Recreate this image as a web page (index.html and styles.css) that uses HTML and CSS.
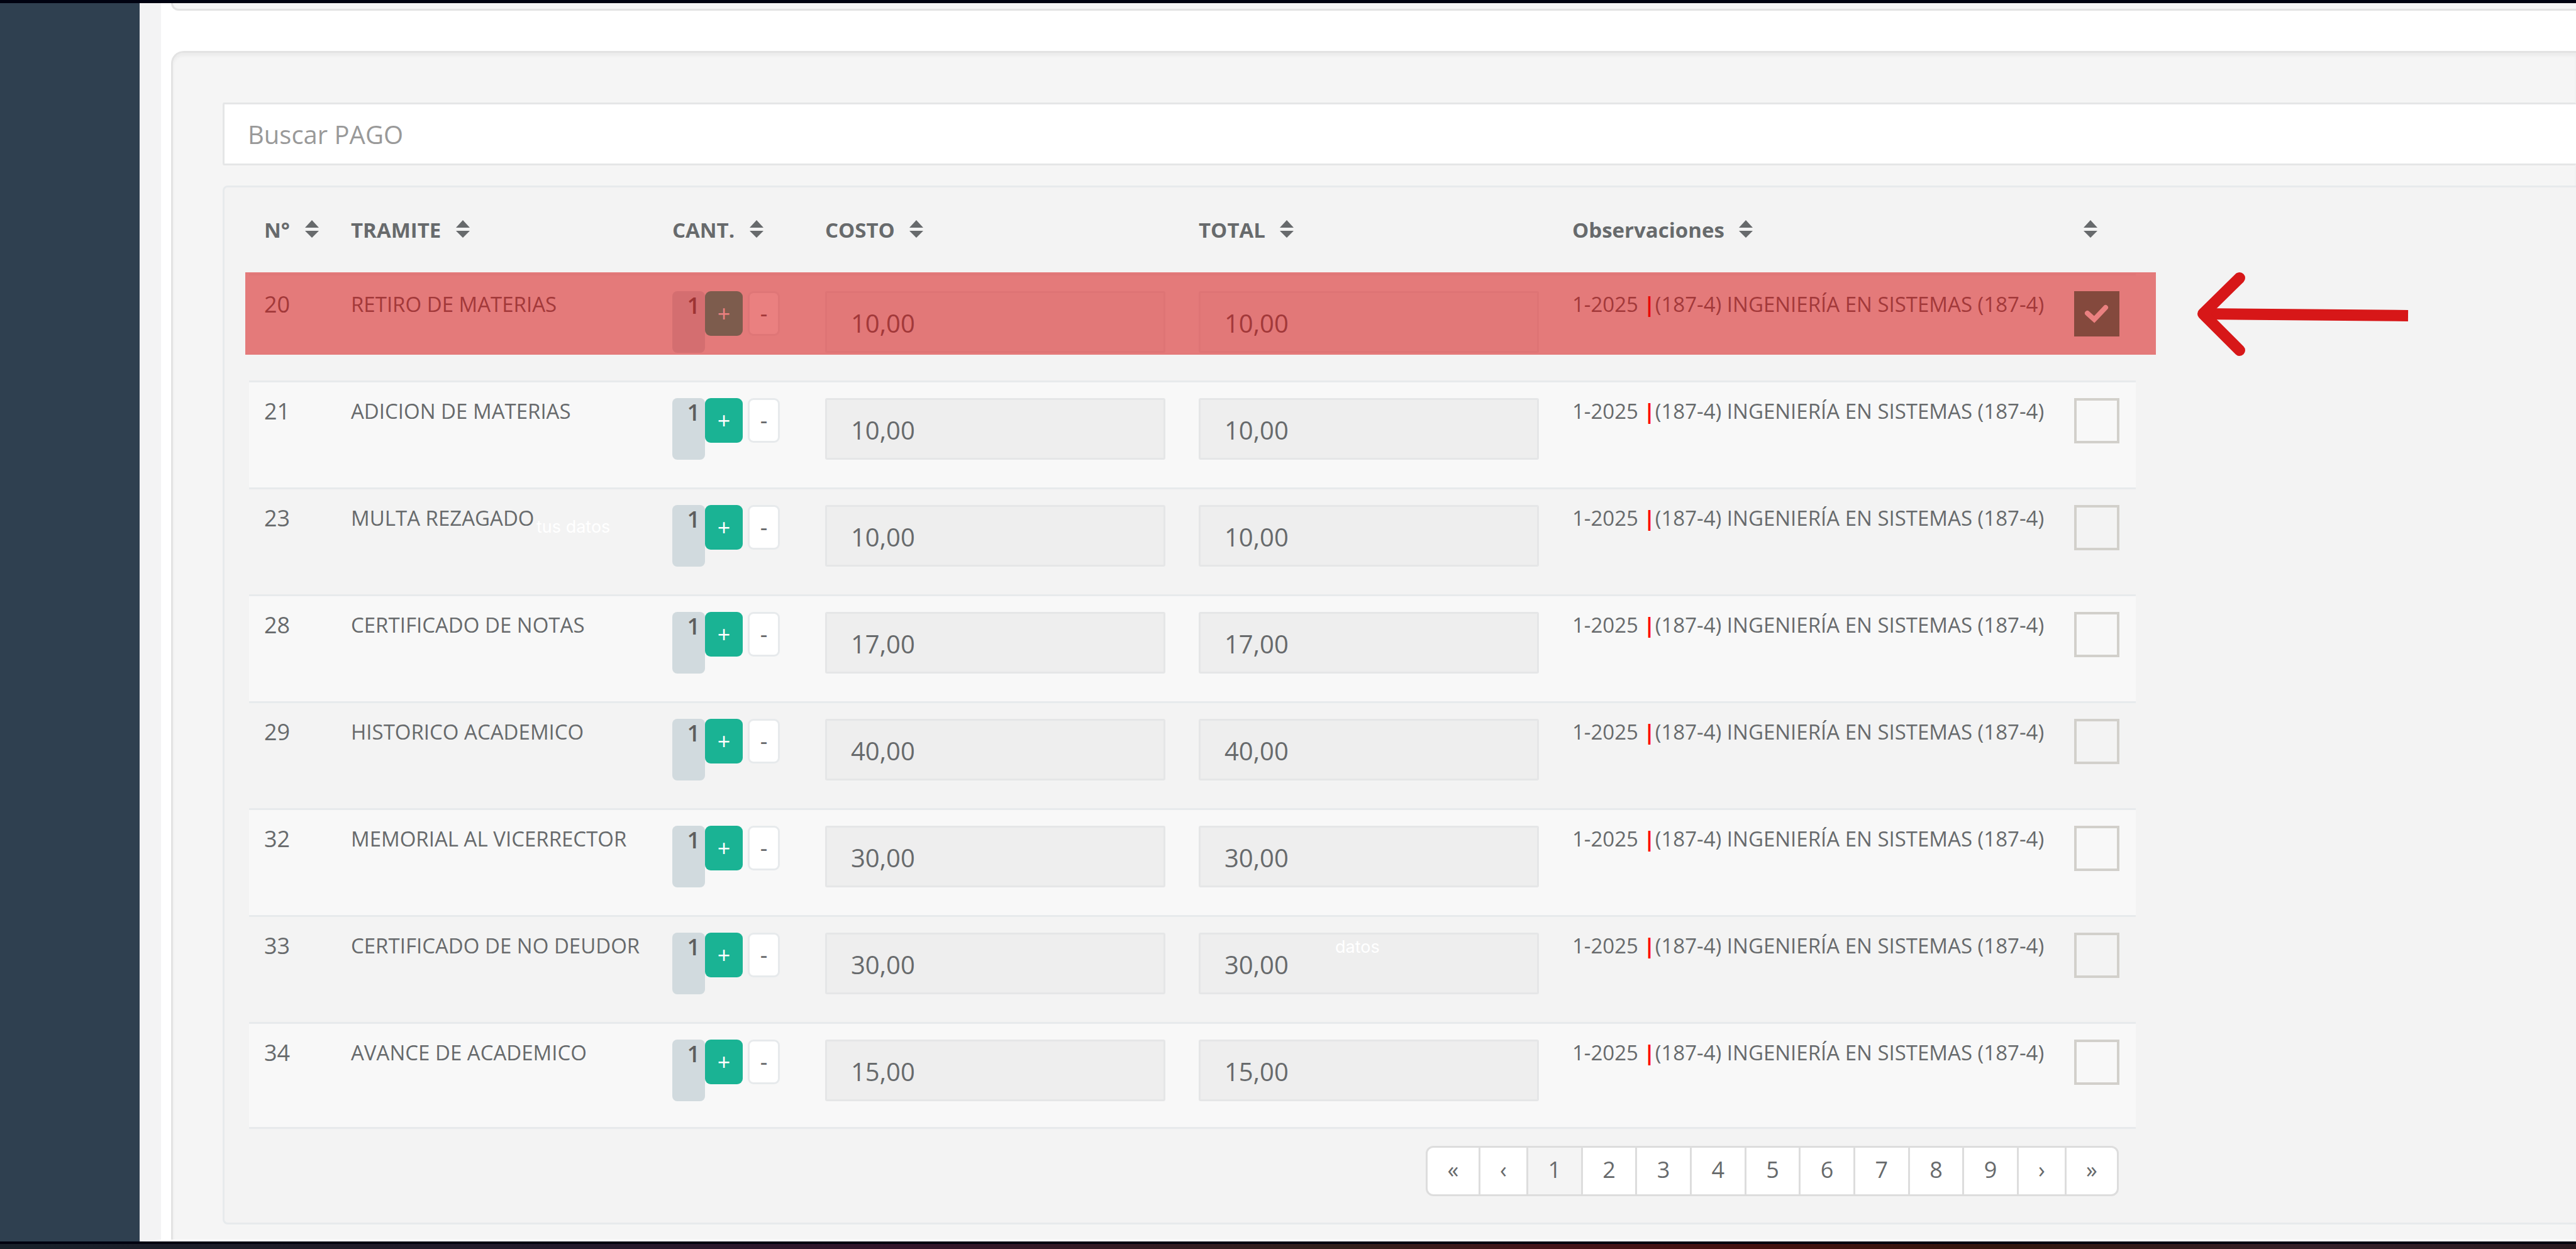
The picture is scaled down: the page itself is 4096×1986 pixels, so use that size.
FILE: index.html
```html
<!DOCTYPE html>
<html lang="es">
<head>
<meta charset="utf-8">
<title>Pagos</title>
<link rel="stylesheet" href="styles.css">
</head>
<body>
<div class="edge-top"></div>
<div class="app">
  <aside class="sidebar"></aside>
  <main class="content">
    <section class="well well-prev"></section>
    <section class="well well-main">
      <input class="search" type="text" placeholder="Buscar PAGO" aria-label="Buscar PAGO">
      <div class="box">
        <table class="tramites">
          <colgroup><col class="c-num"><col class="c-tramite"><col class="c-cant"><col class="c-monto"><col class="c-monto"><col class="c-obs"><col class="c-check"></colgroup>
          <thead>
            <tr id="head"></tr>
          </thead>
          <tbody id="rows"></tbody>
        </table>
        <nav class="pages" id="pages" aria-label="Paginación"></nav>
        <div class="highlight"></div>
        <svg class="arrow" viewBox="0 0 340 136" aria-hidden="true"><path d="M338 70 L11 67" stroke-linecap="butt"/><path d="M70 10 L12 67 L70 125"/></svg>
        <span class="ghost ghost-a">tus datos</span>
        <span class="ghost ghost-b">datos</span>
      </div>
    </section>
  </main>
</div>
<div class="edge-bottom"></div>
<script src="app.js"></script>
</body>
</html>
```
FILE: app.js
```js
const sortIcon = '<svg class="sort" viewBox="0 0 22 28" aria-hidden="true"><path d="M11 0 L22 12 H0 Z M0 17 H22 L11 28 Z"/></svg>';
const heads = ['N°', 'TRAMITE', 'CANT.', 'COSTO', 'TOTAL', 'Observaciones', ''];
document.getElementById('head').innerHTML = heads
  .map(h => `<th scope="col">${h ? h + '&nbsp;' : ''}${sortIcon}</th>`).join('');

const rows = [
  [20, 'RETIRO DE MATERIAS', '10,00'],
  [21, 'ADICION DE MATERIAS', '10,00'],
  [23, 'MULTA REZAGADO', '10,00'],
  [28, 'CERTIFICADO DE NOTAS', '17,00'],
  [29, 'HISTORICO ACADEMICO', '40,00'],
  [32, 'MEMORIAL AL VICERRECTOR', '30,00'],
  [33, 'CERTIFICADO DE NO DEUDOR', '30,00'],
  [34, 'AVANCE DE ACADEMICO', '15,00']
];
document.getElementById('rows').innerHTML = rows.map(([n, name, amount], i) => `
  <tr>
    <td class="num">${n}</td>
    <td>${name}</td>
    <td><div class="qty"><span class="label">1</span><button class="btn plus" type="button">+</button><button class="btn minus" type="button">-</button></div></td>
    <td><input class="amount" type="text" readonly value="${amount}" aria-label="Costo ${name}"></td>
    <td><input class="amount" type="text" readonly value="${amount}" aria-label="Total ${name}"></td>
    <td>1-2025 <b class="bar">|</b>(187-4) INGENIERÍA EN SISTEMAS (187-4)</td>
    <td><label class="tick"><input type="checkbox" aria-label="${name}"${i === 0 ? ' checked' : ''}><svg viewBox="0 0 72 72" aria-hidden="true"><path d="M21 35 L32 45 L50 26"/></svg></label></td>
  </tr>`).join('');

document.getElementById('pages').innerHTML = ['«', '‹', 1, 2, 3, 4, 5, 6, 7, 8, 9, '›', '»']
  .map(p => `<a href="#"${p === 1 ? ' class="active" aria-current="page"' : ''}>${p}</a>`).join('');
```
FILE: styles.css
```css
* { box-sizing: border-box; }
body {
  margin: 0;
  height: 100vh;
  display: flex;
  flex-direction: column;
  overflow: hidden;
  background: #fff;
  color: #676a6c;
  font: 36px/52px "Open Sans", sans-serif;
}
.edge-top { flex: none; height: 5px; background: #000210; }
.edge-bottom {
  flex: none;
  height: 12px;
  border-top: 4px solid #000210;
  background: linear-gradient(90deg, #17202a 0%, #1f1c28 12%, #231a2c 22%, #33152b 35%, #32201c 52%, #45141a 60%, #451110 68%, #33170f 78%, #35202a 90%, #2a1a20 100%);
}
.app { flex: 1; min-height: 0; display: flex; overflow: hidden; }
.sidebar { flex: none; width: 222px; background: #2f4050; }
.content {
  flex: 1;
  min-width: 0;
  border-left: 34px solid #f3f3f4;
  border-bottom: 3px solid #fff;
  padding-left: 16px;
  overflow: hidden;
}
.well {
  background: #f5f5f5;
  border: 3px solid #e3e3e3;
  border-right: 0;
}
.well-prev { height: 12px; border-top: 0; border-bottom-left-radius: 20px; margin-bottom: 64px; }
.well-main {
  border-radius: 20px 0 0 0;
  box-shadow: inset 0 5px 5px rgba(0, 0, 0, 0.04);
  padding: 79px 0 60px 79px;
}
.search {
  display: block;
  width: 100%;
  height: 100px;
  margin-bottom: 32px;
  padding: 0 37px;
  border: 3px solid #e5e6e7;
  border-right: 0;
  border-radius: 3px;
  background: #fff;
  color: inherit;
  font: 40px/56px "Open Sans", sans-serif;
}
.search::placeholder { color: #999; opacity: 1; }
.box {
  position: relative;
  padding: 20px 0 42px 39px;
  border: 3px solid #e7eaec;
  border-right: 0;
  border-radius: 8px 0 0 8px;
  background: #f3f3f3;
}
.tramites { width: 3000px; table-layout: fixed; border-collapse: separate; border-spacing: 0; font-size: 33px; }
.c-num { width: 138px; }
.c-tramite { width: 511px; }
.c-cant { width: 243px; }
.c-monto { width: 594px; }
.c-obs { width: 798px; }
.c-check { width: 122px; }
th { height: 117px; padding: 22px 0 0 24px; text-align: left; vertical-align: top; font-weight: 700; white-space: nowrap; }
.sort { width: 22px; height: 28px; margin-left: 15px; fill: #676a6c; }
td { height: 170px; padding: 20px 0 0 24px; border-top: 3px solid #e7eaec; vertical-align: top; white-space: nowrap; }
.num { font-size: 36px; }
tbody tr:nth-child(even) { background: #f8f8f8; }
tbody tr:last-child td { border-bottom: 3px solid #e7eaec; }
.qty { display: flex; align-items: flex-start; padding-top: 5px; font-size: 36px; }
.label {
  width: 52px;
  height: 98px;
  padding-right: 8px;
  border-radius: 8px;
  background: #d1dade;
  color: #5e5e5e;
  font-weight: 600;
  line-height: 46px;
  text-align: right;
}
.btn { height: 71px; padding: 0; border: 0; border-radius: 9px; font: 36px/52px "Open Sans", sans-serif; }
.plus { width: 60px; background: #1ab394; color: #fff; }
.minus { width: 51px; margin-left: 8px; background: #fff; border: 3px solid #e7eaec; color: #676a6c; }
.amount {
  display: block;
  width: 541px;
  height: 98px;
  margin-top: 5px;
  padding: 2px 38px 0;
  border: 3px solid #e5e6e7;
  border-radius: 3px;
  background: #eee;
  color: inherit;
  font: 40px/56px "Open Sans", sans-serif;
}
.bar { color: #f00; }
.tick { display: block; position: relative; width: 72px; height: 72px; margin-top: 5px; }
.tick input { appearance: none; display: block; width: 72px; height: 72px; margin: 0; border: 4px solid #d2d0cb; }
.tick input:checked { border-color: #288b72; background: #288b72; }
.tick svg { position: absolute; inset: 0; display: none; fill: none; stroke: #fff; stroke-width: 8; stroke-linecap: round; }
.tick input:checked + svg { display: block; }
.pages {
  display: grid;
  grid-template-columns: 84px 76px repeat(9, 1fr) 76px 80px;
  width: 1102px;
  height: 80px;
  margin: 27px 0 0 1871px;
  border: 3px solid #ddd;
  border-radius: 12px;
  background: #fff;
  overflow: hidden;
}
.pages a { color: inherit; text-decoration: none; text-align: center; line-height: 70px; border-right: 3px solid #ddd; }
.pages a:last-child { border-right: 0; }
.pages .active { background: #f4f4f4; }
.highlight { position: absolute; left: 33px; top: 135px; width: 3038px; height: 131px; background: rgba(215, 14, 14, 0.525); }
.arrow { position: absolute; left: 3134px; top: 134px; width: 340px; height: 136px; fill: none; stroke: #d71718; stroke-width: 18; stroke-linecap: round; stroke-linejoin: round; }
.ghost { position: absolute; color: #fff; font: 27px/36px Inter, sans-serif; }
.ghost-a { left: 496px; top: 522px; }
.ghost-b { left: 1766px; top: 1190px; }
```
